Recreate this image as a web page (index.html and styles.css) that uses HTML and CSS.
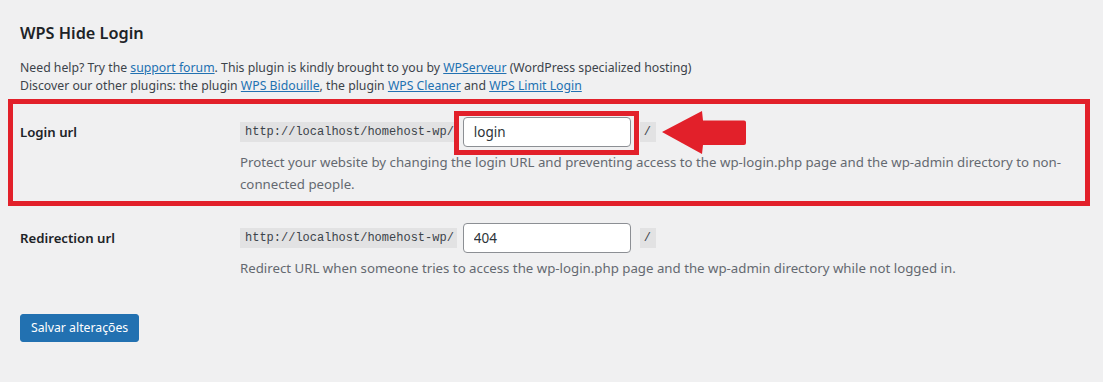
FILE: index.html
```html
<!DOCTYPE html>
<html lang="en">
<head>
<meta charset="utf-8">
<title>WPS Hide Login</title>
<link rel="stylesheet" href="styles.css">
</head>
<body>
<div class="wrap">
  <h2 class="title">WPS Hide Login</h2>
  <p class="intro">Need help? Try the <a href="#">support forum</a>. This plugin is kindly brought to you by <a href="#">WPServeur</a> (WordPress specialized hosting)<br>Discover our other plugins: the plugin <a href="#">WPS Bidouille</a>, the plugin <a href="#">WPS Cleaner</a> and <a href="#">WPS Limit Login</a></p>

  <div class="row row-login">
    <span class="annot-box"></span>
    <label class="row-label" for="login">Login url</label>
    <div class="row-field">
      <div class="field-line">
        <code class="prefix">http://localhost/homehost-wp/</code>
        <span class="hl"><input class="text-input" id="login" type="text" value="login"></span>
        <code class="slash">/</code>
        <svg class="arrow" width="86" height="44" viewBox="0 0 86 44" aria-hidden="true">
          <path d="M1 22 L41 1 L42 10.5 L83 10.5 Q85 10.5 85 12.5 L85 33 Q85 35 83 35 L42 35 L41 44 Z" fill="#e2202a"/>
        </svg>
      </div>
      <p class="description">Protect your website by changing the login URL and preventing access to the wp-login.php page and the wp-admin directory to non-connected people.</p>
    </div>
  </div>

  <div class="row row-redirect">
    <label class="row-label" for="redirect">Redirection url</label>
    <div class="row-field">
      <div class="field-line">
        <code class="prefix">http://localhost/homehost-wp/</code>
        <input class="text-input" id="redirect" type="text" value="404">
        <code class="slash">/</code>
      </div>
      <p class="description">Redirect URL when someone tries to access the wp-login.php page and the wp-admin directory while not logged in.</p>
    </div>
  </div>

  <div class="submit">
    <button class="button-primary" type="button">Salvar alterações</button>
  </div>
</div>
</body>
</html>
```

FILE: styles.css
```css
html, body {
  margin: 0;
  padding: 0;
  background: #f0f0f1;
}
body {
  font-family: "Noto Sans", "Open Sans", sans-serif;
  color: #3c434a;
  font-size: 13px;
  width: 1103px;
  height: 382px;
  overflow: hidden;
}
.wrap {
  padding: 0 20px 0 20px;
}
.title {
  margin: 0;
  padding-top: 21px;
  font-size: 16.3px;
  line-height: 24px;
  font-weight: 600;
  color: #1d2327;
}
.intro {
  margin: 14px 0 0;
  font-size: 12.25px;
  line-height: 18px;
  color: #3c434a;
}
.intro a {
  color: #2271b1;
  text-decoration: underline;
}
.row {
  display: grid;
  grid-template-columns: 220px 1fr;
  position: relative;
}
.row-login {
  padding-top: 22px;
}
.row-redirect {
  padding-top: 28px;
}
.annot-box {
  position: absolute;
  left: -12px;
  right: -7px;
  top: 4px;
  bottom: -11px;
  border: 5px solid #e2202a;
  pointer-events: none;
}
.row-label {
  font-size: 13.2px;
  font-weight: 600;
  line-height: 30px;
  color: #1d2327;
}
.field-line {
  display: flex;
  align-items: center;
  height: 30px;
}
.prefix, .slash {
  font-family: "Liberation Mono", "DejaVu Sans Mono", monospace;
  font-size: 12px;
  line-height: 15px;
  padding: 3px 3px 2px 5px;
  background: #e2e2e3;
  color: #3c434a;
}
.slash {
  margin-left: 9px;
  padding: 3px 5px 2px 4px;
}
.prefix {
  margin-right: 6px;
}
.hl {
  position: relative;
  display: inline-flex;
}
.hl::after {
  content: "";
  position: absolute;
  left: -9px;
  top: -6px;
  right: -8px;
  bottom: -8px;
  border: 5px solid #e2202a;
  pointer-events: none;
}
.text-input {
  box-sizing: border-box;
  width: 168px;
  height: 30px;
  margin: 0;
  padding: 0 10px;
  border: 1px solid #8c8f94;
  border-radius: 4px;
  background: #fff;
  font-family: "Noto Sans", "Open Sans", sans-serif;
  font-size: 13.5px;
  color: #2c3338;
}
.arrow {
  flex: none;
  margin: -7px 0 -7px 5px;
}
.description {
  margin: 4px 0 0;
  font-size: 13.25px;
  line-height: 22px;
  color: #646970;
}
.submit {
  padding-top: 35px;
}
.button-primary {
  box-sizing: border-box;
  height: 28px;
  padding: 0 10px;
  border: 1px solid #2271b1;
  border-radius: 3px;
  background: #2271b1;
  color: #fff;
  font-family: "Noto Sans", "Open Sans", sans-serif;
  font-size: 12.25px;
  line-height: 26px;
  cursor: pointer;
}
```
